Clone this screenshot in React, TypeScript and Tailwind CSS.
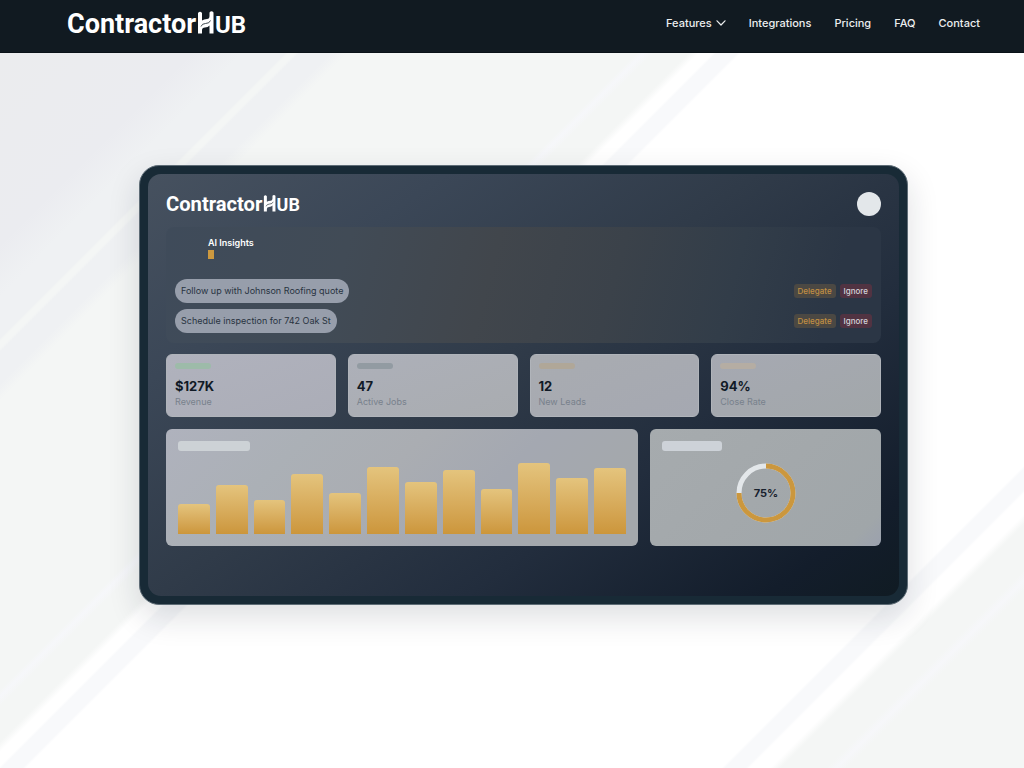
const links = ["Integrations", "Pricing", "FAQ", "Contact"];

const tasks = ["Follow up with Johnson Roofing quote", "Schedule inspection for 742 Oak St"];

const stats = [
  { value: "$127K", label: "Revenue", tag: "bg-[#9dbba9]", card: "from-[#b0b2bd] to-[#abadb7]" },
  { value: "47", label: "Active Jobs", tag: "bg-[#929ba2]", card: "from-[#adb0b9] to-[#a9acb0]" },
  { value: "12", label: "New Leads", tag: "bg-[#b0a798]", card: "from-[#a9acb1] to-[#a5a8b1]" },
  { value: "94%", label: "Close Rate", tag: "bg-[#b5ada3]", card: "from-[#a6a9b2] to-[#a2a7aa]" },
];

const bars = [30, 49, 34, 60, 41, 67, 52, 64, 45, 71, 56, 66];

function Logo({ small = false }: { small?: boolean }) {
  return (
    <svg
      role="img"
      aria-label="ContractorHub"
      viewBox="0 0 182 36"
      className={small ? "w-[136px] shrink-0 text-white" : "w-[182px] shrink-0 text-white"}
      fill="currentColor"
    >
      <text x="0" y="27" fontFamily="Roboto, sans-serif" fontWeight="700" fontSize="27">
        Contractor
      </text>
      {/* H built from two linked hooks */}
      <path d="M131 7 Q133 4.500 135 7 V14.500 Q137 13 140 13 Q142.500 13 142.500 10 V6.500 Q144.500 4 146.500 6.500 V27.500 H142.500 V19.500 Q141 21.500 138 21.500 Q135 21.500 135 24 V27.500 H131 Z" />
      <path
        d="M134 20.500 Q135 17.500 138.500 17.500 Q142.500 17.500 143.500 14.500"
        fill="none"
        stroke="#2a353d"
        strokeWidth="0.900"
      />
      <text x="148" y="27" fontFamily="Roboto, sans-serif" fontWeight="700" fontSize="24">
        UB
      </text>
    </svg>
  );
}

function Header() {
  return (
    <header className="flex h-[53px] items-start justify-between border-b border-[#0a1218] bg-[#111a21] pt-1.5 pr-11 pl-[67px]">
      <a href="#home">
        <Logo />
      </a>
      <nav className="flex items-center gap-[23px] pt-[9px] text-[11px] leading-4 font-medium text-[#eceeef]">
        <button type="button" className="flex items-center gap-1">
          Features
          <svg viewBox="0 0 10 6" className="h-1.5 w-2.5" fill="none" stroke="currentColor" strokeWidth="1.200">
            <path d="M1 0.800 L5 5 L9 0.800" strokeLinecap="round" strokeLinejoin="round" />
          </svg>
        </button>
        {links.map((link) => (
          <a key={link} href={`#${link.toLowerCase()}`}>
            {link}
          </a>
        ))}
      </nav>
    </header>
  );
}

function Insights() {
  return (
    <section className="rounded-lg bg-[linear-gradient(105deg,#3f4b5a_0%,#414b56_25%,#41464c_45%,#3b424a_62%,#323d49_78%,#2b3645_92%)] px-[9px] pt-[9px] pb-2.5">
      <h2 className="ml-[33px] text-[9px] leading-[14px] font-semibold text-white">AI Insights</h2>
      <div className="ml-[33px] h-[9px] w-1.5 bg-[#cd993f]" />
      <ul className="mt-5 flex flex-col gap-1.5">
        {tasks.map((task) => (
          <li key={task} className="flex items-center justify-between">
            <span className="rounded-full bg-[#979eab] px-1.5 text-[9px] leading-6 text-[#28333f]">
              {task}
            </span>
            <span className="flex gap-1 text-[8px] leading-[14px] font-medium">
              <button type="button" className="rounded-[3px] bg-[#4b4843] px-1 text-[#c18f43]">
                Delegate
              </button>
              <button type="button" className="rounded-[3px] bg-[#513342] px-1 text-[#d6d3da]">
                Ignore
              </button>
            </span>
          </li>
        ))}
      </ul>
    </section>
  );
}

function Stats() {
  return (
    <div className="mt-[11px] grid grid-cols-4 gap-3">
      {stats.map((stat) => (
        <div
          key={stat.label}
          className={`rounded-md border border-[#b0b4ba] bg-linear-to-br px-2 pt-2 pb-[7px] ${stat.card}`}
        >
          <div className={`h-1.5 w-9 rounded-full ${stat.tag}`} />
          <p className="mt-[9px] text-[13px] leading-4 font-bold text-[#111a26]">{stat.value}</p>
          <p className="mt-px text-[9px] leading-[14px] text-[#78818c]">{stat.label}</p>
        </div>
      ))}
    </div>
  );
}

function Charts() {
  return (
    <div className="mt-3 grid grid-cols-[472fr_231fr] gap-3">
      <div className="rounded-md bg-[linear-gradient(135deg,#afb2bd_0%,#abb0b6_25%,#aaadb2_45%,#a4a8b1_65%,#a4a8ac_85%)] p-3">
        <div className="h-2.5 w-[72px] rounded-[3px] bg-[#cdd2d6]" />
        <div className="mt-3 flex h-[71px] items-end gap-1.5">
          {bars.map((height, i) => (
            <div
              key={i}
              className="flex-1 rounded-t-[3px] bg-linear-to-b from-[#e4c47d] to-[#cc963b]"
              style={{ height }}
            />
          ))}
        </div>
      </div>
      <div className="flex flex-col rounded-md bg-[linear-gradient(135deg,#a6abae_0%,#a3a8ab_50%,#a0a6a9_90%,#9ba1ae_100%)] p-3">
        <div className="h-2.5 w-[60px] rounded-[3px] bg-[#cdd2d8]" />
        <svg viewBox="0 0 60 60" className="mx-auto mt-3 size-[60px]">
          <circle cx="30" cy="30" r="27" fill="none" stroke="#e3e7ea" strokeWidth="5" />
          <path d="M30 3 A27 27 0 1 1 3 30" fill="none" stroke="#cb973e" strokeWidth="5" />
          <text
            x="30"
            y="34"
            textAnchor="middle"
            fontFamily="Inter, sans-serif"
            fontSize="11"
            fontWeight="700"
            fill="#18212d"
          >
            75%
          </text>
        </svg>
      </div>
    </div>
  );
}

export default function App() {
  return (
    <div className="flex min-h-screen flex-col font-[Inter,sans-serif]">
      <Header />
      <main className="flex-1 bg-[linear-gradient(135deg,#ebecee_0%,#ebecf0_11%,#eff1f3_14%,#eff1f3_16.4%,#f4f6f5_16.6%,#f4f6f5_17%,#eff1f3_17.200%,#eff1f3_19%,#f4f6f5_20%,#f4f6f5_36.600%,#f6f7fa_37%,#f4f6f5_37.600%,#f4f6f5_39.600%,#ffffff_40.200%,#ffffff_41%,#f8f9fb_41.200%,#f8f9fb_42.400%,#ffffff_42.600%,#ffffff_82.600%,#f8f9fb_82.800%,#f8f9fb_84%,#ffffff_84.200%,#ffffff_85.400%,#f4f6f5_86%,#f4f6f5_88.600%,#f6f7fa_89.200%,#f4f6f5_89.800%)] pt-28 pr-[116px] pb-20 pl-[139px]">
        <div className="rounded-[20px] border border-[#5e6c76] bg-[#182a36] p-2 shadow-[0_12px_32px_rgba(20,30,40,0.14)]">
          <div className="rounded-[13px] bg-[linear-gradient(145deg,#46515f_0%,#3b4757_22%,#303b49_45%,#222d3d_68%,#131d2b_90%,#101b23_100%)] px-[18px] pt-[18px] pb-[50px]">
            <div className="mb-[11px] flex h-6 items-center justify-between">
              <Logo small />
              <div className="size-6 rounded-full bg-[#e3e7ea]" />
            </div>
            <Insights />
            <Stats />
            <Charts />
          </div>
        </div>
      </main>
    </div>
  );
}
